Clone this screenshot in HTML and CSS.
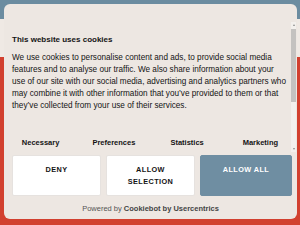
FILE: index.html
```html
<!DOCTYPE html>
<html>
<head>
<meta charset="utf-8">
<link rel="stylesheet" href="styles.css">
</head>
<body>
<div class="dialog">
  <div class="scroller">
    <div class="content">
      <h2 class="title">This website uses cookies</h2>
      <p class="text">We use cookies to personalise content and ads, to provide social media<br>features and to analyse our traffic. We also share information about your<br>use of our site with our social media, advertising and analytics partners who<br>may combine it with other information that you’ve provided to them or that<br>they’ve collected from your use of their services.</p>
      <div class="tabs">
        <span class="tab">Necessary</span>
        <span class="tab">Preferences</span>
        <span class="tab">Statistics</span>
        <span class="tab">Marketing</span>
      </div>
    </div>
    <div class="scrollbar">
      <span class="arrow up"></span>
      <span class="thumb"></span>
      <span class="arrow down"></span>
    </div>
  </div>
  <div class="buttons">
    <button class="btn">DENY</button>
    <button class="btn">ALLOW<br>SELECTION</button>
    <button class="btn primary">ALLOW ALL</button>
  </div>
  <div class="powered">Powered by <b>Cookiebot by Usercentrics</b></div>
</div>
</body>
</html>
```
FILE: styles.css
```css
html, body {
  margin: 0;
  padding: 0;
}
body {
  width: 300px;
  height: 225px;
  overflow: hidden;
  font-family: "Liberation Sans", Arial, sans-serif;
  color: #141414;
  background: linear-gradient(to bottom, #6b8ca0 0, #6b8ca0 19px, #efe9e4 19px, #efe9e4 57px, #d2402f 57px);
  padding: 4px 3px 0 4px;
  box-sizing: border-box;
}
.dialog {
  background: #ede7e2;
  border-radius: 6px;
  height: 215px;
  display: flex;
  flex-direction: column;
  padding-top: 18px;
  box-sizing: border-box;
}
.scroller {
  height: 130px;
  display: flex;
  overflow: hidden;
}
.content {
  flex: 1;
  padding: 12px 0 0 8px;
  min-width: 0;
}
.scrollbar {
  width: 5px;
  margin-right: 1px;
  background: #f3f0ed;
  display: flex;
  flex-direction: column;
  align-items: center;
  padding: 2px 0;
}
.arrow {
  width: 0;
  height: 0;
  border-left: 1.5px solid transparent;
  border-right: 1.5px solid transparent;
}
.arrow.up {
  border-bottom: 2px solid #8a8a8a;
}
.arrow.down {
  border-top: 2px solid #8a8a8a;
}
.thumb {
  width: 5px;
  height: 73px;
  margin: 3px 0 auto;
  background: #c4c2c0;
}
.title {
  margin: 0;
  font-size: 8px;
  font-weight: bold;
  line-height: 12px;
}
.text {
  margin: 6px 0 0;
  font-size: 8.2px;
  line-height: 12px;
  white-space: nowrap;
}
.tabs {
  display: grid;
  grid-template-columns: repeat(4, 1fr);
  margin: 25px -6px 0 -8px;
}
.tab {
  text-align: center;
  font-size: 7.5px;
  font-weight: bold;
  line-height: 12px;
}
.buttons {
  display: grid;
  grid-template-columns: 89px 89px 92px;
  gap: 5px;
  padding: 3px 0 0 8px;
}
.btn {
  height: 41px;
  background: #ffffff;
  border: 1px solid #e6e2df;
  border-radius: 2px;
  font-family: "Liberation Sans", Arial, sans-serif;
  font-size: 7.3px;
  font-weight: bold;
  letter-spacing: 0.4px;
  line-height: 12px;
  color: #141414;
  padding: 8px 0 0;
  display: flex;
  align-items: flex-start;
  justify-content: center;
  text-align: center;
}
.btn.primary {
  background: #6f8ea2;
  border-color: #6f8ea2;
  color: #ffffff;
}
.powered {
  text-align: center;
  font-size: 7.5px;
  color: #555;
  margin-top: 8px;
}
.powered b {
  color: #444;
}
```
